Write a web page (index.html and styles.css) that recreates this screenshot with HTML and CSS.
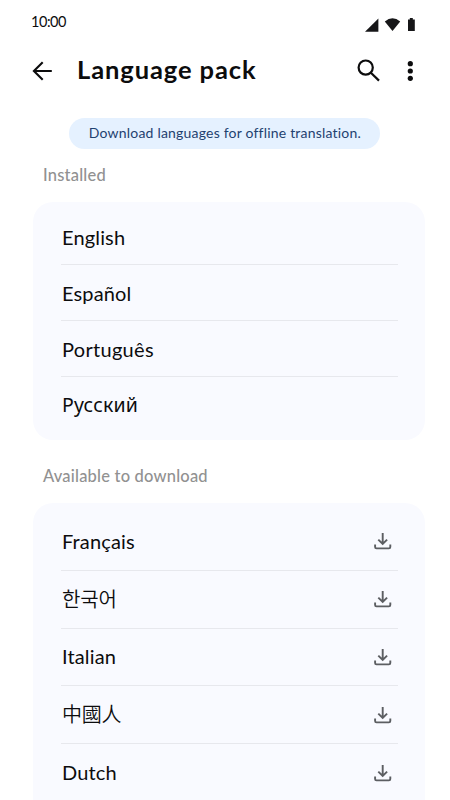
FILE: index.html
```html
<!DOCTYPE html>
<html lang="en">
<head>
<meta charset="utf-8">
<title>Language pack</title>
<link rel="stylesheet" href="styles.css">
</head>
<body>
<svg width="0" height="0" class="defs">
  <symbol id="download" viewBox="0 0 18 18">
    <path d="M8.7 .9V11.6M4.3 7.6L8.7 12L13.1 7.6M1.1 12.4V15Q1.1 16.4 2.5 16.4H14.9Q16.3 16.4 16.3 15V12.4" fill="none" stroke="#5c5e62" stroke-width="1.9"/>
  </symbol>
</svg>
<div class="screen">
  <div class="status">
    <span class="time">10:00</span>
    <svg width="51" height="14" viewBox="0 0 51 14" fill="#161618">
      <path d="M0 13.8L13.4 .4V13.8Z"/>
      <path d="M19.8 3.5Q27.5 -2.9 35.2 3.5L27.5 13Z"/>
      <path d="M43 1.4H44.8V0H47.8V1.4H49.8V13H43Z"/>
    </svg>
  </div>
  <header class="bar">
    <svg class="back" width="20" height="20" viewBox="0 0 20 20" fill="none" stroke="#0c0c0d" stroke-width="2.1"><path d="M19.8 10H2M10.7 1.2L1.9 10L10.7 18.8"/></svg>
    <h1 class="title">Language pack</h1>
    <svg class="search" width="23" height="23" viewBox="0 0 23 23" fill="none" stroke="#0c0c0d" stroke-width="2.2"><circle cx="8.7" cy="8.6" r="7.1"/><path d="M13.6 13.5L22 21.6"/></svg>
    <svg class="more" width="6" height="20" viewBox="0 0 6 20" fill="#0c0c0d"><circle cx="3.3" cy="2.7" r="2.6"/><circle cx="3.3" cy="10" r="2.6"/><circle cx="3.3" cy="17.3" r="2.6"/></svg>
  </header>
  <p class="banner"><span>Download languages for offline translation.</span></p>
  <h2 class="label">Installed</h2>
  <ul class="card installed">
    <li><span class="english">English</span></li>
    <li><span class="spanish">Español</span></li>
    <li><span class="portuguese">Português</span></li>
    <li><span class="russian">Русский</span></li>
  </ul>
  <h2 class="label available-label">Available to download</h2>
  <ul class="card available">
    <li><span class="french">Français</span><svg width="18" height="18"><use href="#download"/></svg></li>
    <li><span class="korean" lang="ko">한국어</span><svg width="18" height="18"><use href="#download"/></svg></li>
    <li><span class="italian">Italian</span><svg width="18" height="18"><use href="#download"/></svg></li>
    <li><span class="chinese" lang="zh-Hant">中國人</span><svg width="18" height="18"><use href="#download"/></svg></li>
    <li><span class="dutch">Dutch</span><svg width="18" height="18"><use href="#download"/></svg></li>
  </ul>
</div>
</body>
</html>
```
FILE: styles.css
```css
* { box-sizing: border-box; margin: 0; padding: 0; }
body { background: #fff; font-family: Lato, "Noto Sans", "Liberation Sans", sans-serif; color: #0c0c0d; }
svg { display: block; flex: none; }
.defs { position: absolute; }
.screen { width: 450px; height: 800px; overflow: hidden; }
.status { display: flex; align-items: center; justify-content: space-between; height: 44px; padding: 5px 34px 0 31px; }
.time { font-size: 14.5px; line-height: 18px; margin-top: -5px; letter-spacing: -.45px; }
.bar { display: flex; align-items: center; height: 53px; padding: 0 37px 0 32px; }
.title { font-size: 25.5px; line-height: 30px; font-weight: 700; margin: -3px 0 0 25px; letter-spacing: .9px; white-space: nowrap; }
.search { margin-left: auto; }
.more { margin-left: 27px; }
.banner { display: flex; align-items: center; justify-content: center; width: 311px; height: 31px; margin: 21px 0 0 69.4px; padding-bottom: 2px; border-radius: 16px; background: #e5f1ff; color: #1f4170; font-size: 14px; letter-spacing: .2px; white-space: nowrap; }
.label { margin: 16px 0 0 43px; font-size: 16.5px; line-height: 20px; font-weight: 500; color: #919191; letter-spacing: .2px; }
.available-label { margin-top: 26px; }
.card { list-style: none; width: 392px; margin: 17px 0 0 33px; padding: 7.3px 27px 0 28px; border-radius: 20px; background: #f9faff; }
.card li { display: flex; align-items: center; justify-content: space-between; padding: 0 6px 0 1px; font-size: 20px; line-height: 26px; letter-spacing: .15px; border-bottom: 1px solid #e7e8ed; }
.card li:last-child { border-bottom: 0; }
.installed { height: 238px; }
.installed li { height: 55.8px; padding-top: 1px; }
.available { height: 320px; padding-top: 10px; }
.available li { height: 57.75px; }
.portuguese { letter-spacing: .3px; }
.russian { font-family: "Noto Sans", sans-serif; font-size: 19.5px; letter-spacing: .2px; }
.korean { font-family: "Noto Sans CJK KR", sans-serif; font-weight: 350; font-size: 20px; letter-spacing: -.2px; margin-top: -1px; }
.italian, .dutch { margin-top: -1px; }
.chinese { font-family: "Noto Sans CJK TC", sans-serif; font-weight: 350; font-size: 20px; letter-spacing: -.2px; margin-top: -1px; }
```
